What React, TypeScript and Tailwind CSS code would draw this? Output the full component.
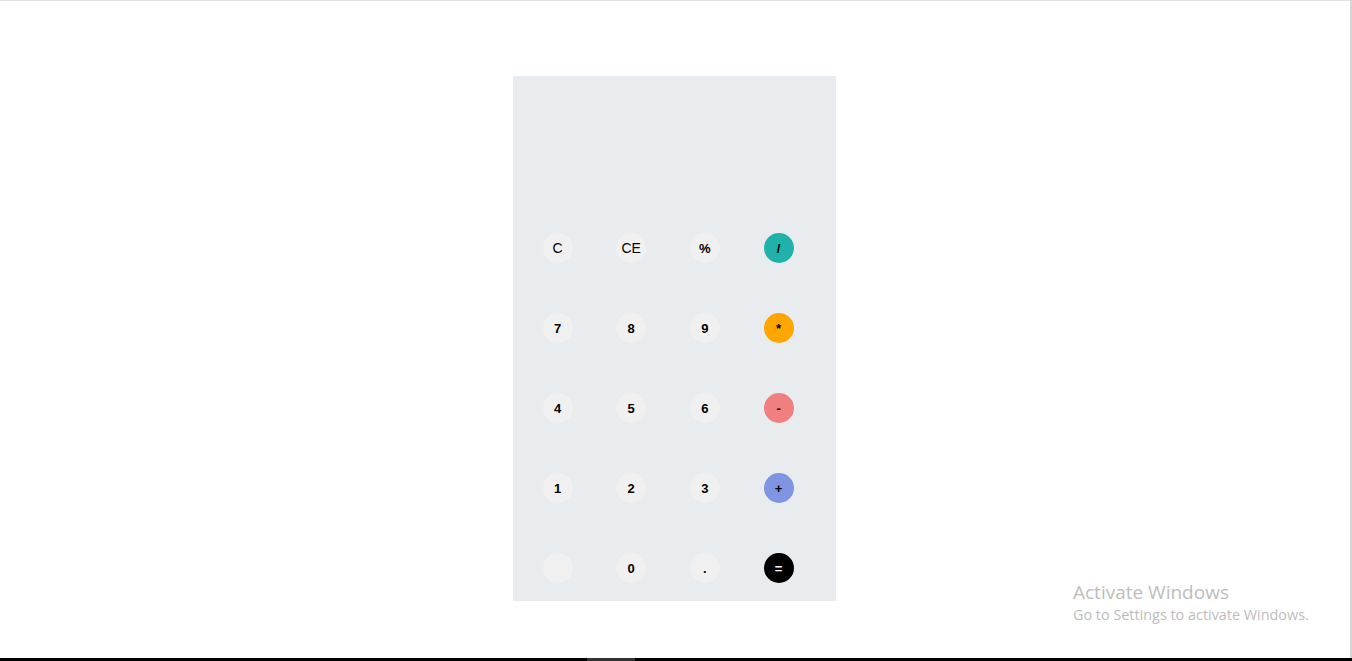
const keys: { label: string; cls: string }[] = [
  { label: "C", cls: "bg-[#f0f0f0] font-normal text-[14px]" },
  { label: "CE", cls: "bg-[#f0f0f0] font-normal text-[14px]" },
  { label: "%", cls: "bg-[#f0f0f0]" },
  { label: "/", cls: "bg-[#20b2aa]" },
  { label: "7", cls: "bg-[#f0f0f0]" },
  { label: "8", cls: "bg-[#f0f0f0]" },
  { label: "9", cls: "bg-[#f0f0f0]" },
  { label: "*", cls: "bg-[#ffa500]" },
  { label: "4", cls: "bg-[#f0f0f0]" },
  { label: "5", cls: "bg-[#f0f0f0]" },
  { label: "6", cls: "bg-[#f0f0f0]" },
  { label: "-", cls: "bg-[#f08080]" },
  { label: "1", cls: "bg-[#f0f0f0]" },
  { label: "2", cls: "bg-[#f0f0f0]" },
  { label: "3", cls: "bg-[#f0f0f0]" },
  { label: "+", cls: "bg-[#7f95e1]" },
  { label: "", cls: "bg-[#f0f0f0]" },
  { label: "0", cls: "bg-[#f0f0f0]" },
  { label: ".", cls: "bg-[#f0f0f0]" },
  { label: "=", cls: "bg-black text-white" },
];

export default function App() {
  return (
    <main className="relative h-[661px] w-[1352px] overflow-hidden bg-white font-['Liberation_Sans',Arial,sans-serif]">
      <div className="flex h-full">
        <div className="flex flex-1 flex-col border-t border-[#e3e3e3] pr-[2px]">
          <div className="pt-[75px]">
            {/* calculator */}
            <div className="mx-auto flex h-[525px] w-[323px] flex-col bg-[#e9ecef]">
              <div className="h-[157px]" />
              <div className="grid grid-cols-[repeat(4,30px)] gap-x-[43.7px] gap-y-[50px] pl-[30px]">
                {keys.map((k, i) => (
                  <button
                    key={i}
                    className={`flex h-[30px] w-[30px] items-center justify-center rounded-full pt-px text-[13px] font-bold text-black ${k.cls}`}
                  >
                    {k.label}
                  </button>
                ))}
              </div>
            </div>
          </div>
        </div>
        <div className="w-[2px] bg-[#d6d6d6]" />
      </div>

      {/* taskbar edge */}
      <div className="absolute bottom-0 left-0 flex h-[3px] w-full bg-black">
        <div className="ml-[587px] w-[48px] bg-[#333333]" />
      </div>

      {/* watermark */}
      <div className="absolute left-[1073px] top-[579px] font-['Open_Sans','Noto_Sans',sans-serif] text-[#bdbdbd]">
        <div className="text-[19px] leading-[26px]">Activate Windows</div>
        <div className="text-[14.4px] leading-[20px]">Go to Settings to activate Windows.</div>
      </div>
    </main>
  );
}
